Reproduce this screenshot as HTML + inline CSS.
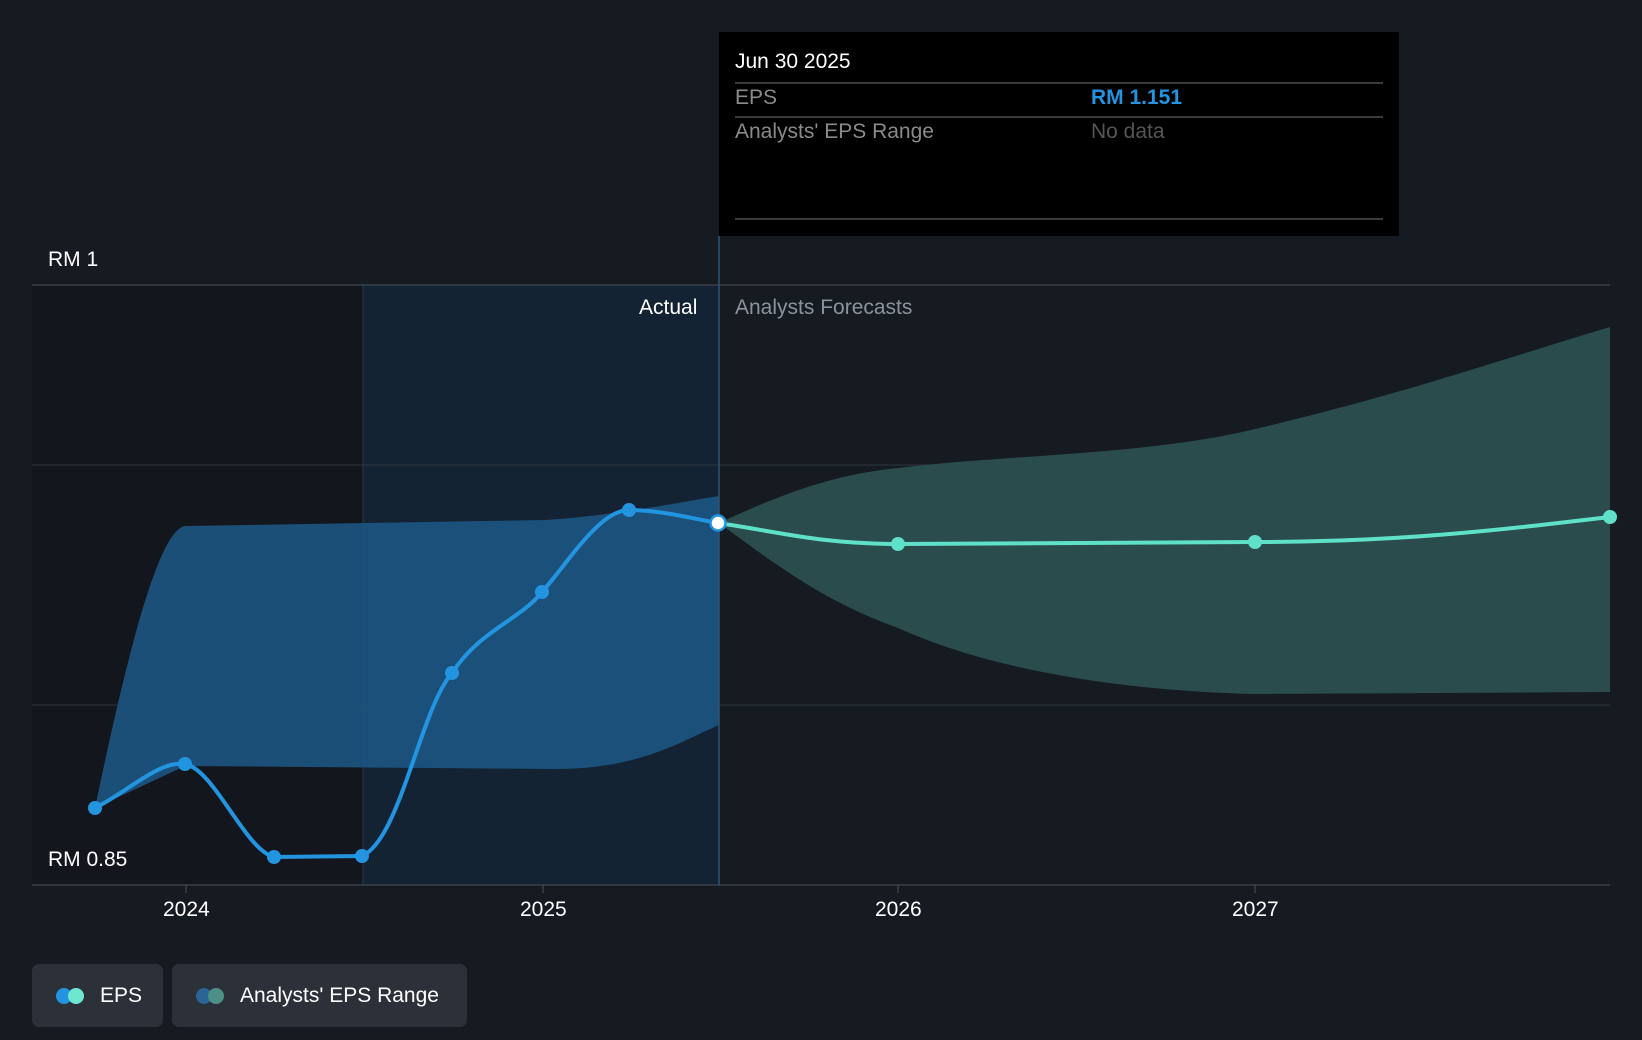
<!DOCTYPE html>
<html><head><meta charset="utf-8"><style>
body{margin:0;width:1642px;height:1040px;background:#161b22;overflow:hidden;font-family:"Liberation Sans",sans-serif;}
.t{position:absolute;white-space:nowrap}
.btn{position:absolute;top:964px;height:63px;background:#2c3038;border-radius:7px;color:#fff;font-size:21px;line-height:63px}
.dot{position:absolute;top:24px;width:16px;height:16px;border-radius:50%}
</style></head><body>
<svg width="1642" height="1040" style="position:absolute;left:0;top:0">
<rect x="32" y="285" width="331" height="600" fill="#13171d"/>
<rect x="363" y="285" width="356" height="600" fill="#132334"/>
<line x1="363" y1="285" x2="363" y2="885" stroke="#243a50" stroke-width="1"/>
<line x1="32" y1="285" x2="1610" y2="285" stroke="#3a4048" stroke-width="1.5"/>
<line x1="32" y1="465" x2="1610" y2="465" stroke="#2e343c" stroke-width="1"/>
<line x1="32" y1="705" x2="1610" y2="705" stroke="#2e343c" stroke-width="1"/>
<line x1="32" y1="885" x2="1610" y2="885" stroke="#3a4048" stroke-width="1.5"/>
<line x1="186" y1="885" x2="186" y2="893" stroke="#4a5058"/>
<line x1="543" y1="885" x2="543" y2="893" stroke="#4a5058"/>
<line x1="898" y1="885" x2="898" y2="893" stroke="#4a5058"/>
<line x1="1255" y1="885" x2="1255" y2="893" stroke="#4a5058"/>
<path d="M95,808 C130,640 160,530 185,526 L545,520 C620,515 680,502 719,496 L719,725 C680,742 640,768 560,769 L185,766 Z" fill="#1d5582" opacity="0.9"/>
<path d="M719,523 C780,495 830,475 898,468 C1000,455 1150,455 1255,429 C1400,395 1500,360 1610,327 L1610,692 L1255,694 C1100,690 980,665 898,628 C820,600 770,560 719,523 Z" fill="#2b4f50" opacity="0.95"/>
<line x1="719" y1="236" x2="719" y2="885" stroke="#2c5577" stroke-width="1.5"/>
<path d="M95,808 C130,790 160,760 185,764 C215,770 245,850 274,857 L362,856 C400,840 420,710 452,673 C480,630 520,620 542,592 C570,560 600,510 629,510 C660,510 690,518 718,523" fill="none" stroke="#2394e0" stroke-width="4"/>
<path d="M718,523 C780,532 820,544 898,544 L1255,542 C1400,542 1500,530 1610,517" fill="none" stroke="#5fe0c8" stroke-width="4"/>
<g fill="#2394e0"><circle cx="95" cy="808" r="7"/><circle cx="185" cy="764" r="7"/><circle cx="274" cy="857" r="7"/><circle cx="362" cy="856" r="7"/><circle cx="452" cy="673" r="7"/><circle cx="542" cy="592" r="7"/><circle cx="629" cy="510" r="7"/></g>
<g fill="#5fe0c8"><circle cx="898" cy="544" r="7"/><circle cx="1255" cy="542" r="7"/><circle cx="1610" cy="517" r="7"/></g>
<circle cx="718" cy="523" r="7.5" fill="#fff" stroke="#2394e0" stroke-width="2.5"/>
<rect x="719" y="32" width="680" height="204" fill="#000"/>
<line x1="735" y1="83" x2="1383" y2="83" stroke="#3a3a3a" stroke-width="2"/>
<line x1="735" y1="117" x2="1383" y2="117" stroke="#3a3a3a" stroke-width="2"/>
<line x1="735" y1="219" x2="1383" y2="219" stroke="#3a3a3a" stroke-width="2"/>
</svg>
<div class="t" style="left:735px;top:50px;font-size:21px;color:#fff">Jun 30 2025</div>
<div class="t" style="left:735px;top:86px;font-size:21px;color:#8a8a8a">EPS</div>
<div class="t" style="left:1091px;top:86px;font-size:21px;color:#2394e0;font-weight:bold">RM 1.151</div>
<div class="t" style="left:735px;top:120px;font-size:21px;color:#8a8a8a">Analysts' EPS Range</div>
<div class="t" style="left:1091px;top:120px;font-size:21px;color:#555">No data</div>
<div class="t" style="left:48px;top:248px;font-size:21px;color:#fff">RM 1</div>
<div class="t" style="left:48px;top:848px;font-size:21px;color:#fff">RM 0.85</div>
<div class="t" style="left:639px;top:296px;font-size:21px;color:#fff">Actual</div>
<div class="t" style="left:735px;top:296px;font-size:21px;color:#8c939c">Analysts Forecasts</div>
<div class="t" style="left:163px;top:898px;font-size:21px;color:#fff">2024</div>
<div class="t" style="left:520px;top:898px;font-size:21px;color:#fff">2025</div>
<div class="t" style="left:875px;top:898px;font-size:21px;color:#fff">2026</div>
<div class="t" style="left:1232px;top:898px;font-size:21px;color:#fff">2027</div>
<div class="btn" style="left:32px;width:131px"><span class="dot" style="left:24px;background:#2394e0"></span><span class="dot" style="left:36px;background:#6ee6d2"></span><span style="position:absolute;left:68px">EPS</span></div>
<div class="btn" style="left:172px;width:295px"><span class="dot" style="left:24px;background:#2a6596"></span><span class="dot" style="left:36px;background:#4e9088"></span><span style="position:absolute;left:68px">Analysts' EPS Range</span></div>
</body></html>
